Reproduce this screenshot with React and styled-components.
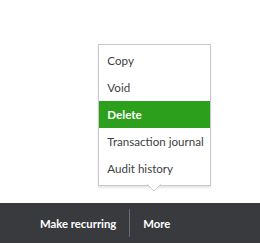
import React from "react";
import styled, { createGlobalStyle } from "styled-components";

const Global = createGlobalStyle`
  html, body { margin: 0; padding: 0; background: #ffffff; }
  body { font-family: Lato, "Open Sans", sans-serif; }
  #root { height: 100vh; }
`;

const Page = styled.div`
  height: 243px;
  display: flex;
  flex-direction: column;
`;

const Canvas = styled.div`
  flex: 1;
`;

const Bar = styled.div`
  height: 40px;
  background: #393a3d;
  display: flex;
  align-items: stretch;
  padding-left: 40px;
`;

const BarItem = styled.div`
  position: relative;
  display: flex;
  align-items: center;
  color: #ffffff;
  font-size: 11.3px;
  font-weight: 700;
  padding: ${(p) => p.$pad || "0"};
`;

const Divider = styled.div`
  width: 1px;
  background: #6b6c70;
  margin: 6px 0 6px 13px;
`;

const Menu = styled.div`
  position: absolute;
  left: -32px;
  bottom: calc(100% + 17px);
  width: 111px;
  background: #ffffff;
  border: 1px solid #c9c9cc;
  box-shadow: 0 2px 2px rgba(0, 0, 0, 0.1);
  padding: 2px 0 3px;
  display: flex;
  flex-direction: column;
  font-weight: 400;
`;

const Arrow = styled.svg`
  position: absolute;
  left: 48px;
  top: 100%;
  margin-top: -1px;
`;

const MenuItem = styled.div`
  height: 27px;
  display: flex;
  align-items: center;
  padding-left: 8px;
  font-size: 11.6px;
  white-space: nowrap;
  color: ${(p) => (p.$active ? "#ffffff" : "#404144")};
  font-weight: ${(p) => (p.$active ? 700 : 400)};
  background: ${(p) => (p.$active ? "#2ca01c" : "transparent")};
`;

const items = ["Copy", "Void", "Delete", "Transaction journal", "Audit history"];

export default function App() {
  return (
    <Page>
      <Global />
      <Canvas />
      <Bar>
        <BarItem>Make recurring</BarItem>
        <Divider />
        <BarItem $pad="0 0 0 13px">
          More
          <Menu>
            {items.map((t) => (
              <MenuItem key={t} $active={t === "Delete"}>
                {t}
              </MenuItem>
            ))}
            <Arrow width="14" height="8" viewBox="0 0 14 8">
              <path d="M0 0 L7 7 L14 0" fill="#ffffff" stroke="#c9c9cc" strokeWidth="1" />
              <path d="M0.5 0 L13.5 0" stroke="#ffffff" strokeWidth="1.5" />
            </Arrow>
          </Menu>
        </BarItem>
      </Bar>
    </Page>
  );
}
